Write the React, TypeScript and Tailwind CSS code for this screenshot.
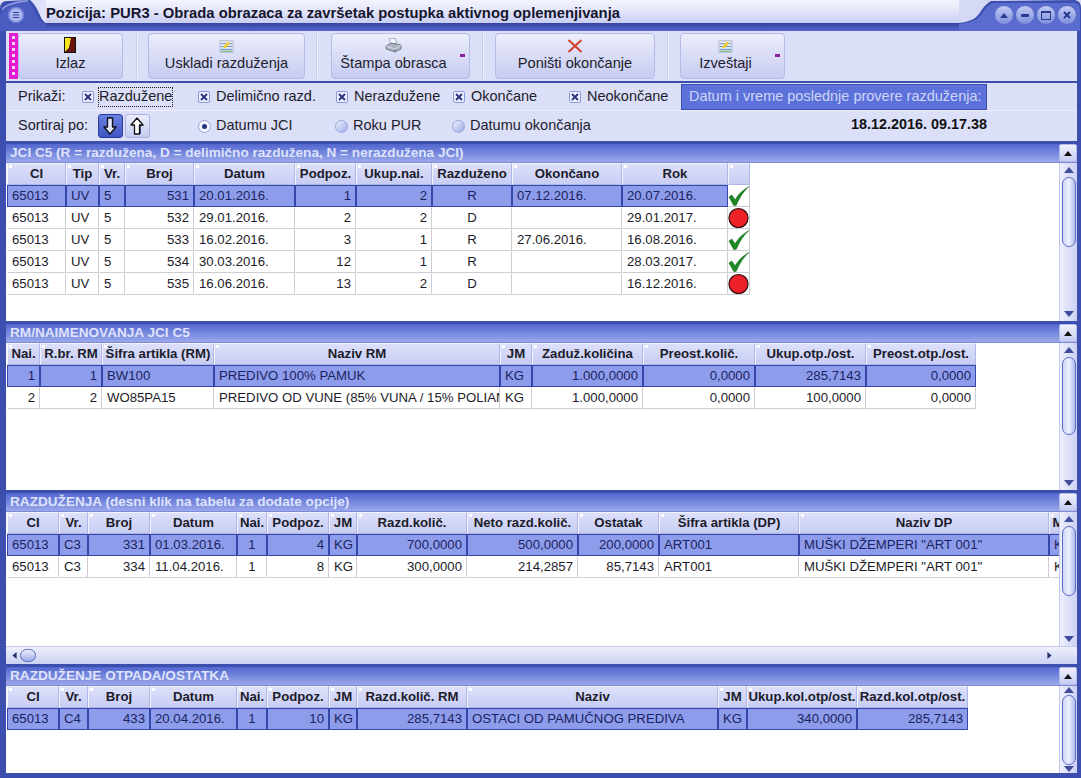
import React from 'react';

type Cell = { t: string; a?: 'l' | 'r' | 'c'; icon?: React.ReactNode };

const Up = ({ className = '' }: { className?: string }) => (
  <svg viewBox="0 0 10 6" className={`w-[10px] h-[6px] ${className}`}><path d="M5 0 10 6H0Z" fill="currentColor" /></svg>
);

const WinBtn = ({ children }: { children: React.ReactNode }) => (
  <div className="w-[20px] h-[20px] rounded-full bg-gradient-to-b from-[#c3caf4] to-[#7f8edd] border border-[#5868c6] flex items-center justify-center text-[#2c3a8e]">
    {children}
  </div>
);

const TitleBar = () => (
  <div className="h-[31px] flex shrink-0 font-bold text-[14.8px] text-[#15152e]">
    <div className="w-[46px] h-[31px] shrink-0 bg-[#dfe2f9]">
      <svg viewBox="0 0 46 31" className="w-[46px] h-[31px] block">
        <path d="M0 31V8Q0 2 6 1L30 0Q35 4 39 13 42 21 46 23V31Z" fill="#3d4fae" />
        <path d="M2 12Q6 4 28 2 33 6 36 14 39 22 46 24V31H0V14Z" fill="#4a5cc0" />
        <path d="M2 10Q6 3 28 1" fill="none" stroke="#93a0e6" strokeWidth="1.5" />
        <circle cx="16" cy="15" r="7.5" fill="#a9b3ee" stroke="#7483d8" strokeWidth="1.5" />
        <path d="M13 12.5h6M13 15h6M13 17.5h6" stroke="#38489f" strokeWidth="1.2" />
      </svg>
    </div>
    <div className="flex-1 flex flex-col">
      <div className="h-[23px] bg-gradient-to-b from-[#f3f4fd] via-[#e2e5fa] to-[#c8cdf2] flex items-center pt-[3px] whitespace-nowrap">Pozicija: PUR3 - Obrada obrazaca za završetak postupka aktivnog oplemenjivanja</div>
      <div className="flex-1 bg-gradient-to-b from-[#33449f] to-[#5365cb]" />
    </div>
    <div className="w-[122px] relative shrink-0 bg-[#d5d9f6]">
      <svg viewBox="0 0 122 31" className="w-[122px] h-[31px] absolute inset-0">
        <path d="M0 23Q14 22 20 14 26 4 32 1L116 0Q122 1 122 8V31H0Z" fill="#3d4fae" />
        <path d="M0 24Q16 23 22 15 28 6 33 3H116Q121 4 121 10V31H0Z" fill="#5a6cd0" />
      </svg>
      <div className="absolute top-[5px] right-[4px] flex gap-[1px]">
        <WinBtn><Up className="!w-[8px] !h-[5px]" /></WinBtn>
        <WinBtn><div className="w-[8px] h-[3px] bg-[#2c3a8e] rounded-[1px]" /></WinBtn>
        <WinBtn><div className="w-[10px] h-[9px] border border-[#2c3a8e] border-t-2" /></WinBtn>
        <WinBtn>
          <svg viewBox="0 0 8 8" className="w-[8px] h-[8px]"><path d="M1 1 7 7M7 1 1 7" stroke="currentColor" strokeWidth="2" /></svg>
        </WinBtn>
      </div>
    </div>
  </div>
);

const ChartIcon = () => (
  <svg viewBox="0 0 16 14" className="w-[15px] h-[13px]">
    <rect x="1" y="1" width="14" height="12" fill="#eef0f8" stroke="#7f8ca8" strokeWidth=".6" />
    <path d="M2 4h12M2 7h12M2 10h12" stroke="#5a86c8" />
    <path d="M4 8 9 2l3 1-5 6Z" fill="#f2cf2c" />
    <path d="M2 12h12" stroke="#58a85a" />
  </svg>
);

const DoorIcon = () => (
  <svg viewBox="0 0 12 16" className="w-[12px] h-[16px]">
    <rect x="0" y="0" width="12" height="16" fill="#14100c" />
    <path d="M1 1H7L6 7 5 11 1 15Z" fill="#f6e71c" />
    <path d="M7 1H11V15H1L5 11 6 7Z" fill="#6a1410" />
  </svg>
);

const PrinterIcon = () => (
  <svg viewBox="0 0 17 15" className="w-[17px] h-[15px]">
    <path d="M4 1 10 0l2 5-6 1Z" fill="#f4f6fb" stroke="#7a8296" strokeWidth=".6" />
    <path d="M1 8 6 5l10 2v4l-6 3-9-3Z" fill="#aab2c2" stroke="#454c60" strokeWidth=".6" />
    <path d="M1 8l9 3 6-4" fill="none" stroke="#e6e9f2" strokeWidth=".8" />
    <path d="M10 11v3" stroke="#454c60" strokeWidth=".6" />
  </svg>
);

const XIcon = () => (
  <svg viewBox="0 0 16 14" className="w-[16px] h-[14px]">
    <path d="M1.5 1 14.5 13M14.5 1 1.5 13" stroke="#d2402a" strokeWidth="2" />
  </svg>
);

const ToolBtn = ({ label, icon, width, dash }: { label: string; icon: React.ReactNode; width: string; dash?: boolean }) => (
  <div className={`${width} h-[46px] relative shrink-0 rounded-[4px] border border-[#b4bbe6] bg-gradient-to-b from-[#eceefc] to-[#c6cbf1] flex items-center justify-center text-[14.6px] leading-[16px] text-[#1d1d2c]`}>
    <div className={`flex flex-col items-center justify-end h-full pb-[7px] ${dash ? 'mr-[14px]' : ''}`}>
      <div className="h-[17px] flex items-end justify-center mb-[2px]">{icon}</div>
      <span>{label}</span>
    </div>
    {dash && <div className="absolute right-[4px] top-[20px] w-[5px] h-[3px] bg-[#8a1fa0]" />}
  </div>
);

const Sep = () => <div className="w-[2px] h-[46px] bg-[#eef0fd] border-l border-[#c8ccef] shrink-0" />;

const Toolbar = () => (
  <div className="h-[50px] shrink-0 bg-[#dcdff8] flex items-center pl-[3px] pb-[1px]">
    <div className="w-[9px] h-[46px] bg-[#e81ad0] shrink-0 flex flex-col justify-evenly items-center">
      {[0, 1, 2, 3, 4, 5, 6].map(i => <div key={i} className="w-[3px] h-[3px] bg-[#f0d8f4]" />)}
    </div>
    <ToolBtn label="Izlaz" icon={<DoorIcon />} width="w-[105px]" />
    <div className="w-[13px]" /><Sep /><div className="w-[10px]" />
    <ToolBtn label="Uskladi razduženja" icon={<ChartIcon />} width="w-[157px]" />
    <div className="w-[11px]" /><Sep /><div className="w-[13px]" />
    <ToolBtn label="Štampa obrasca" icon={<PrinterIcon />} width="w-[139px]" dash />
    <div className="w-[12px]" /><Sep /><div className="w-[11px]" />
    <ToolBtn label="Poništi okončanje" icon={<XIcon />} width="w-[160px]" />
    <div className="w-[12px]" /><Sep /><div className="w-[11px]" />
    <ToolBtn label="Izveštaji" icon={<ChartIcon />} width="w-[105px]" dash />
  </div>
);

const Check = ({ label, width, focus }: { label: string; width: string; focus?: boolean }) => (
  <div className={`${width} shrink-0 flex items-center gap-[6px]`}>
    <div className="w-[12px] h-[12px] rounded-[2px] border border-[#8d98d8] bg-[#eef0fc] flex items-center justify-center">
      <svg viewBox="0 0 8 8" className="w-[8px] h-[8px]"><path d="M1 1 7 7M7 1 1 7" stroke="#26337f" strokeWidth="1.8" /></svg>
    </div>
    <span className={focus ? 'border border-dotted border-[#222] h-[20px] -ml-[2px] flex items-center' : ''}>{label}</span>
  </div>
);

const Radio = ({ label, width, on }: { label: string; width: string; on?: boolean }) => (
  <div className={`${width} shrink-0 flex items-center gap-[5px]`}>
    <div className={`w-[13px] h-[13px] rounded-full border border-[#9aa4dc] flex items-center justify-center ${on ? 'bg-[#f2f3fd]' : 'bg-gradient-to-br from-[#f0f2fd] to-[#9eaae6]'}`}>
      {on && <div className="w-[5px] h-[5px] rounded-full bg-[#27337e]" />}
    </div>
    <span>{label}</span>
  </div>
);

const SortBtn = ({ down, on }: { down?: boolean; on?: boolean }) => (
  <div className={`w-[25px] h-[24px] rounded-[3px] border flex items-center justify-center shrink-0 ${on ? 'bg-gradient-to-b from-[#6a80e4] to-[#3f55c4] border-[#2c3d9c]' : 'bg-gradient-to-b from-[#eceefc] to-[#c6cbf1] border-[#aab2e4]'}`}>
    <svg viewBox="0 0 15 18" className={`w-[15px] h-[18px] ${down ? 'rotate-180 -scale-x-100' : ''}`}>
      {!on && <path d="M9 3 14 9H11V17H7Z" fill="#3d4fae" />}
      <path d="M7 1 13 8H9.5V17H4.5V8H1Z" fill={on ? '#dfe3fb' : '#fff'} stroke="#111" strokeWidth="1.3" strokeLinejoin="round" />
    </svg>
  </div>
);

const Filters = () => (
  <div className="h-[60px] shrink-0 bg-[#dcdff8] border-t-2 border-[#3d4fae] flex flex-col text-[14.5px] text-[#1d1d2c]">
    <div className="h-[28px] flex items-center pl-[12px] border-b border-[#eceefc]">
      <div className="w-[64px] shrink-0">Prikaži:</div>
      <Check label="Razdužene" width="w-[116px]" focus />
      <Check label="Delimično razd." width="w-[138px]" />
      <Check label="Nerazdužene" width="w-[117px]" />
      <Check label="Okončane" width="w-[116px]" />
      <Check label="Neokončane" width="w-[112px]" />
      <div className="w-[306px] h-[26px] shrink-0 bg-[#5c72da] border border-[#3d4fae] text-[#cfd5f8] flex items-center pl-[7px] whitespace-nowrap overflow-hidden">Datum i vreme poslednje provere razduženja:</div>
    </div>
    <div className="flex-1 flex items-center pl-[12px] pr-[90px]">
      <div className="w-[80px] shrink-0">Sortiraj po:</div>
      <div className="w-[100px] shrink-0 flex gap-[2px]"><SortBtn down on /><SortBtn /></div>
      <Radio label="Datumu JCI" width="w-[137px]" on />
      <Radio label="Roku PUR" width="w-[117px]" />
      <Radio label="Datumu okončanja" width="w-[160px]" />
      <div className="flex-1 text-right font-bold text-[14.4px] text-[#111] mb-[3px]">18.12.2016. 09.17.38</div>
    </div>
  </div>
);

const VScroll = ({ thumb }: { thumb: string }) => (
  <div className="w-[18px] shrink-0 bg-gradient-to-r from-[#eef0fc] to-[#ccd1f3] border-l border-[#c3c8ee] flex flex-col items-center text-[#3f4d9c]">
    <div className="h-[14px] flex items-center"><Up /></div>
    <div className={`${thumb} w-[14px] shrink-0 rounded-[7px] border border-[#5c6cc4] bg-gradient-to-r from-[#cfd5f7] via-[#eef0fd] to-[#aeb8ec]`} />
    <div className="flex-1" />
    <div className="h-[14px] flex items-center"><Up className="rotate-180" /></div>
  </div>
);

const Panel = ({ title, className, thumb, cols, width, heads, rows, hscroll }: {
  title: string; className: string; thumb: string; cols: string; width: string; heads: string[]; rows: Cell[][]; hscroll?: boolean;
}) => (
  <div className={`${className} flex flex-col bg-white overflow-hidden`}>
    <div className="h-[19px] shrink-0 flex bg-gradient-to-b from-[#5366cf] to-[#9ca8ea] border-b border-[#7d8ad8]">
      <div className="flex-1 pl-[4px] font-bold text-[13.6px] leading-[18px] text-[#dfe3fc] whitespace-nowrap">{title}</div>
      <div className="w-[18px] bg-gradient-to-b from-[#f0f1fd] to-[#c6ccf2] border border-[#b4bbe6] rounded-[2px] flex items-center justify-center text-[#111]"><Up className="!w-[8px] !h-[5px]" /></div>
    </div>
    <div className="flex-1 flex min-h-0">
      <div className="flex-1 min-w-0 overflow-hidden pl-[1px]">
        <div className={`grid ${cols} ${width} auto-rows-[22px] text-[13.2px] text-[#1c1c2a]`}>
          {heads.map((h, i) => (
            <div key={i} className="relative overflow-hidden whitespace-nowrap border border-[#f2f3fd] border-b-[#aeb6e8] border-r-[#aeb6e8] bg-gradient-to-b from-[#dde0fa] to-[#c8cdf4] font-bold text-center leading-[20px]">
              <span className="absolute left-[1px] top-[1px] w-[3px] h-[3px] bg-white" />
              {h}
            </div>
          ))}
          {rows.map((row, ri) => row.map((c, i) => c.icon ? (
            <div key={`${ri}-${i}`} className="border-r border-b border-[#cdcdd4] flex items-center justify-center overflow-hidden">{c.icon}</div>
          ) : (
            <div key={`${ri}-${i}`} className={`overflow-hidden whitespace-nowrap px-[4px] leading-[20px] border ${ri === 0 ? 'bg-[#8e9cec] border-[#3547a8] text-[#1b2460]' : 'border-transparent border-r-[#cdcdd4] border-b-[#cdcdd4]'} ${c.a === 'r' ? 'text-right' : c.a === 'c' ? 'text-center' : ''}`}>{c.t}</div>
          )))}
        </div>
      </div>
      <VScroll thumb={thumb} />
    </div>
    {hscroll && (
      <div className="h-[18px] shrink-0 border-t border-[#c3c8ee] bg-gradient-to-b from-[#eef0fc] to-[#ccd1f3] flex items-center text-[#24306e] pl-[5px] pr-[24px]">
        <Up className="-rotate-90 !w-[7px] !h-[5px]" />
        <div className="w-[16px] h-[13px] ml-[2px] rounded-full border border-[#5c6cc4] bg-gradient-to-b from-[#eef0fd] to-[#9eaae6]" />
        <div className="flex-1" />
        <Up className="rotate-90 !w-[7px] !h-[5px]" />
      </div>
    )}
  </div>
);

const l = (t: string): Cell => ({ t });
const r = (t: string): Cell => ({ t, a: 'r' });
const c = (t: string): Cell => ({ t, a: 'c' });

const OkIcon = () => (
  <svg viewBox="0 0 22 22" className="w-[22px] h-[22px]">
    <path d="M1 12 4 10 7.5 15C11 9 15 5 22 1 16 6 12 13 8.5 21H6Z" fill="#1c8a24" stroke="#0e5c14" strokeWidth=".5" />
  </svg>
);

const BadIcon = () => (
  <svg viewBox="0 0 22 22" className="w-[22px] h-[22px]">
    <circle cx="11" cy="11" r="10" fill="#ee2028" stroke="#2a0a0a" strokeWidth="1.2" />
  </svg>
);

const ok: Cell = { t: '', icon: <OkIcon /> };
const bad: Cell = { t: '', icon: <BadIcon /> };

const jci = (broj: string, dat: string, pod: string, uk: string, st: string, oko: string, rok: string): Cell[] => [
  l('65013'), l('UV'), l('5'), r(broj), l(dat), r(pod), r(uk), c(st), l(oko), l(rok), st === 'R' ? ok : bad,
];

const panels = {
  jci: [
    jci('531', '20.01.2016.', '1', '2', 'R', '07.12.2016.', '20.07.2016.'),
    jci('532', '29.01.2016.', '2', '2', 'D', '', '29.01.2017.'),
    jci('533', '16.02.2016.', '3', '1', 'R', '27.06.2016.', '16.08.2016.'),
    jci('534', '30.03.2016.', '12', '1', 'R', '', '28.03.2017.'),
    jci('535', '16.06.2016.', '13', '2', 'D', '', '16.12.2016.'),
  ],
  rm: [
    [r('1'), r('1'), l('BW100'), l('PREDIVO 100% PAMUK'), l('KG'), r('1.000,0000'), r('0,0000'), r('285,7143'), r('0,0000')],
    [r('2'), r('2'), l('WO85PA15'), l('PREDIVO OD VUNE (85% VUNA / 15% POLIAMID)'), l('KG'), r('1.000,0000'), r('0,0000'), r('100,0000'), r('0,0000')],
  ],
  raz: [
    [l('65013'), l('C3'), r('331'), l('01.03.2016.'), c('1'), r('4'), l('KG'), r('700,0000'), r('500,0000'), r('200,0000'), l('ART001'), l('MUŠKI DŽEMPERI "ART 001"'), l('KG')],
    [l('65013'), l('C3'), r('334'), l('11.04.2016.'), c('1'), r('8'), l('KG'), r('300,0000'), r('214,2857'), r('85,7143'), l('ART001'), l('MUŠKI DŽEMPERI "ART 001"'), l('KG')],
  ],
  otp: [
    [l('65013'), l('C4'), r('433'), l('20.04.2016.'), c('1'), r('10'), l('KG'), r('285,7143'), l('OSTACI OD PAMUČNOG PREDIVA'), l('KG'), r('340,0000'), r('285,7143')],
  ],
};

export default function App() {
  return (
    <div className="w-[1081px] h-[778px] flex flex-col overflow-hidden bg-[#3d4fae]" style={{ fontFamily: '"Liberation Sans", Arial, sans-serif' }}>
      <TitleBar />
      <div className="flex-1 min-h-0 flex flex-col pl-[6px] pr-[4px] pb-[5px]">
        <Toolbar />
        <Filters />
        <div className="flex-1 min-h-0 flex flex-col gap-[3px] pt-[3px]">
          <Panel
            title="JCI C5 (R = razdužena, D = delimično razdužena, N = nerazdužena JCI)"
            className="h-[177px] shrink-0"
            thumb="h-[70px]"
            cols="grid-cols-[59px_33px_26px_69px_101px_61px_76px_80px_110px_106px_22px]"
            width="w-[743px]"
            heads={['CI', 'Tip', 'Vr.', 'Broj', 'Datum', 'Podpoz.', 'Ukup.nai.', 'Razduženo', 'Okončano', 'Rok', '']}
            rows={panels.jci}
          />
          <Panel
            title="RM/NAIMENOVANJA JCI C5"
            className="h-[166px] shrink-0"
            thumb="h-[78px]"
            cols="grid-cols-[33px_62px_112px_286px_32px_111px_112px_111px_110px]"
            width="w-[969px]"
            heads={['Nai.', 'R.br. RM', 'Šifra artikla (RM)', 'Naziv RM', 'JM', 'Zaduž.količina', 'Preost.količ.', 'Ukup.otp./ost.', 'Preost.otp./ost.']}
            rows={panels.rm}
          />
          <Panel
            title="RAZDUŽENJA (desni klik na tabelu za dodate opcije)"
            className="h-[171px] shrink-0"
            thumb="h-[70px]"
            cols="grid-cols-[52px_29px_62px_87px_30px_62px_28px_110px_111px_81px_140px_250px_18px]"
            width="w-[1060px]"
            heads={['CI', 'Vr.', 'Broj', 'Datum', 'Nai.', 'Podpoz.', 'JM', 'Razd.količ.', 'Neto razd.količ.', 'Ostatak', 'Šifra artikla (DP)', 'Naziv DP', 'M']}
            rows={panels.raz}
            hscroll
          />
          <Panel
            title="RAZDUŽENJE OTPADA/OSTATKA"
            className="flex-1 min-h-0"
            thumb="h-[70px]"
            cols="grid-cols-[52px_29px_62px_87px_30px_62px_28px_110px_251px_29px_110px_111px]"
            width="w-[961px]"
            heads={['CI', 'Vr.', 'Broj', 'Datum', 'Nai.', 'Podpoz.', 'JM', 'Razd.količ. RM', 'Naziv', 'JM', 'Ukup.kol.otp/ost.', 'Razd.kol.otp/ost.']}
            rows={panels.otp}
          />
        </div>
      </div>
    </div>
  );
}
